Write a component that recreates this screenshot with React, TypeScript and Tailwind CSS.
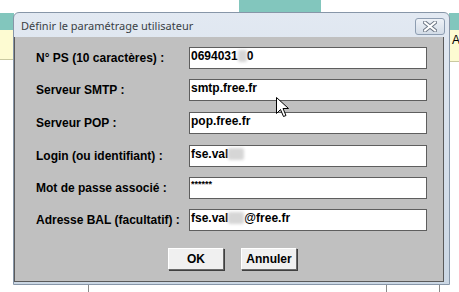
import React from "react";

const label = "font-['Liberation_Sans',Arial,sans-serif] font-bold text-[12px] leading-[14px] text-black";

function Blur({ w }: { w: number }) {
  return (
    <span
      className="inline-block h-[12px] align-[-2px] bg-[#d6d6d6] blur-[1.5px] rounded-[2px]"
      style={{ width: w }}
    />
  );
}

function Field({ name, value, mt }: { name: string; value: React.ReactNode; mt: string }) {
  return (
    <div className={`flex items-center h-[22px] ${mt}`}>
      <div className={`${label} w-[153px] shrink-0 whitespace-nowrap`}>{name}</div>
      <div className={`w-[238px] h-[22px] bg-white border border-[#5e5e5e] pl-[1px] pt-[1px] ${label} whitespace-nowrap overflow-hidden`}>
        {value}
      </div>
    </div>
  );
}

export default function App() {
  return (
    <div className="relative w-[459px] h-[292px] overflow-hidden bg-white">
      {/* background windows */}
      <div className="absolute left-[239px] top-0 w-[82px] h-[12px] bg-[#82c6bd]" />
      <div className="absolute left-0 top-[13px] w-[14px] h-[17px] bg-[#82c6bd]" />
      <div className="absolute left-0 top-[30px] w-[14px] h-[30px] bg-[#fdfbd2] border-b border-[#c9c9a0]" />
      <div className="absolute left-[449px] top-[13px] w-[10px] h-[17px] bg-[#82c6bd]" />
      <div className="absolute left-[449px] top-[30px] w-[10px] h-[32px] bg-[#fdfbd2] border-b border-[#c9c9a0] pl-[3px] pt-[3px] font-['Liberation_Sans',Arial,sans-serif] text-[12px] leading-[14px] text-black">
        A
      </div>
      <div className="absolute left-[88px] top-[284px] w-px h-[8px] bg-[#8a8a8a]" />
      <div className="absolute left-[386px] top-[284px] w-px h-[8px] bg-[#8a8a8a]" />
      <div className="absolute left-[439px] top-[284px] w-px h-[8px] bg-[#8a8a8a]" />

      {/* dialog window */}
      <div className="absolute left-[13px] top-[12px] w-[437px] h-[273px] rounded-t-[6px] border border-[#8796a8] bg-gradient-to-b from-[#e2e9f2] to-[#cbd7e4] flex flex-col">
        <div className="h-[24px] shrink-0 flex items-center justify-between pl-[7px] pr-[4px]">
          <span className="font-['Noto_Sans',sans-serif] text-[11px] leading-[14px] text-[#3a3f45] mt-[1px]">
            Définir le paramétrage utilisateur
          </span>
          <div className="w-[30px] h-[17px] mt-[3px] rounded-[3px] border border-[#8d9db1] bg-gradient-to-b from-[#eef2f7] to-[#d3dce7] flex items-center justify-center">
            <svg width="14" height="11" viewBox="0 0 14 11">
              <path d="M2 1.5 L12 9.5 M12 1.5 L2 9.5" stroke="#6d7785" strokeWidth="4" strokeLinecap="square" />
              <path d="M2 1.5 L12 9.5 M12 1.5 L2 9.5" stroke="#ffffff" strokeWidth="2" strokeLinecap="square" />
            </svg>
          </div>
        </div>
        <div className="flex-1 mr-[5px] mb-[2px] bg-[#c0c0c0] border-l border-r border-b border-[#5a5a5a] pt-[10px] pl-[21px] flex flex-col">
          <Field mt="mt-0" name="N° PS (10 caractères) :" value={<span>0694031<Blur w={9} />0</span>} />
          <Field mt="mt-[10px]" name="Serveur SMTP :" value="smtp.free.fr" />
          <Field mt="mt-[11px]" name="Serveur POP :" value="pop.free.fr" />
          <Field mt="mt-[11px]" name="Login (ou identifiant) :" value={<span>fse.val<Blur w={16} /></span>} />
          <Field
            mt="mt-[10px]"
            name="Mot de passe associé :"
            value={<span className="text-[9px] leading-[10px] align-top">******</span>}
          />
          <Field mt="mt-[10px]" name="Adresse BAL (facultatif) :" value={<span>fse.val<Blur w={16} />@free.fr</span>} />
          <div className="flex gap-[17px] pl-[132px] mt-[17px]">
            <button className={`w-[56px] h-[22px] bg-[#f0f0f0] border border-t-white border-l-white border-r-[#6a6a6a] border-b-[#6a6a6a] shadow-[1px_1px_0_#404040] ${label}`}>
              OK
            </button>
            <button className={`w-[56px] h-[22px] bg-[#f0f0f0] border border-t-white border-l-white border-r-[#6a6a6a] border-b-[#6a6a6a] shadow-[1px_1px_0_#404040] ${label}`}>
              Annuler
            </button>
          </div>
        </div>
      </div>

      {/* mouse cursor */}
      <svg className="absolute left-[276px] top-[97px]" width="13" height="21" viewBox="0 0 13 21">
        <path
          d="M0.5 0.5 L0.5 16.5 L4.5 12.5 L7.5 19.5 L10 18.5 L7 11.5 L12.5 11.5 Z"
          fill="#ffffff"
          stroke="#000000"
          strokeWidth="1"
          strokeLinejoin="miter"
        />
      </svg>
    </div>
  );
}
